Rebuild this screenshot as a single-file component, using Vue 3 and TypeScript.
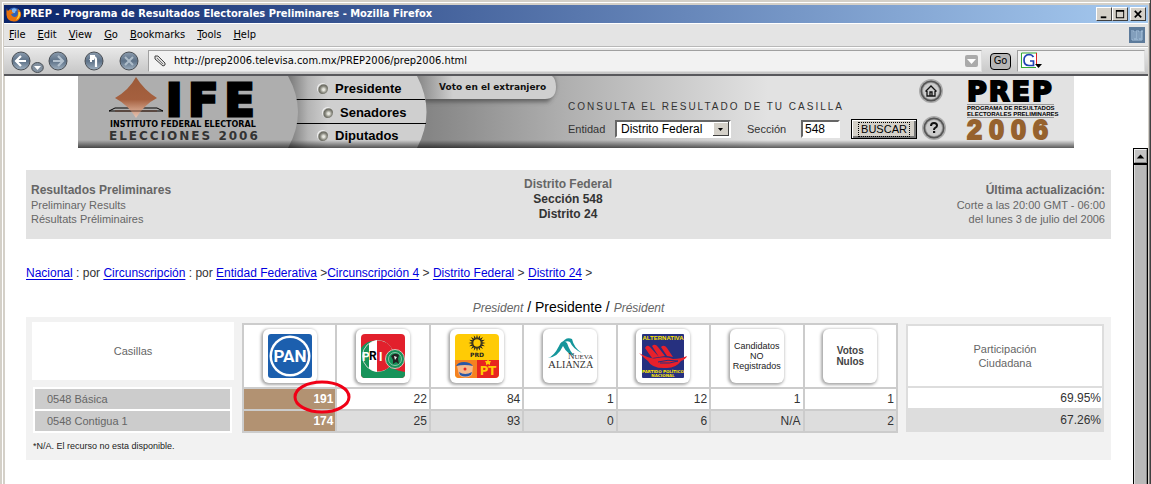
<script setup lang="ts">
interface Party {
  id: string
  name: string
  votes: [string, string]
}

const menus: string[] = ['File', 'Edit', 'View', 'Go', 'Bookmarks', 'Tools', 'Help']
const elections: string[] = ['Presidente', 'Senadores', 'Diputados']
const stations: string[] = ['0548 Básica', '0548 Contigua 1']
const turnout: string[] = ['69.95%', '67.26%']

const parties: Party[] = [
  { id: 'pan', name: 'PAN', votes: ['191', '174'] },
  { id: 'pri', name: 'PRI', votes: ['22', '25'] },
  { id: 'prd', name: 'PRD PT', votes: ['84', '93'] },
  { id: 'alianza', name: 'Nueva Alianza', votes: ['1', '0'] },
  { id: 'alternativa', name: 'Alternativa', votes: ['12', '6'] },
  { id: 'otros', name: 'Candidatos no registrados', votes: ['1', 'N/A'] },
  { id: 'nulos', name: 'Votos nulos', votes: ['1', '2'] },
]

const rays: number[] = Array.from({ length: 16 }, (_, i) => i * 22.5)
</script>

<template>
  <div class="window">
    <header class="titlebar">
      <svg class="fox" viewBox="0 0 16 16" aria-hidden="true">
        <circle cx="8" cy="8" r="6.6" fill="#2f62b8" />
        <path d="M6 3 Q9 1 11 4 Q9 5 9 7 L6 7Z" fill="#7fb6ee" />
        <path d="M1 2 Q1 5 2 5 Q4 3 6 4 Q5 6 8 7 Q6 8 5 8 Q6 11 9 11 Q12 10 12 7 Q11 4 12 3 Q16 6 15 10 Q13 15.500 8 15.500 Q1 15 .5 9 Q0 5 1 2Z" fill="#e8720c" />
        <path d="M14 6 Q15 12 10 14 Q13 10 12.500 6Z" fill="#ffd23a" />
      </svg>
      <h1>PREP - Programa de Resultados Electorales Preliminares - Mozilla Firefox</h1>
      <div class="winbtns">
        <button type="button" aria-label="Minimize">
          <svg viewBox="0 0 13 11"><path d="M3 8h6v2H3z" /></svg>
        </button>
        <button type="button" aria-label="Maximize">
          <svg viewBox="0 0 13 11"><path d="M2 1h9v9H2zM3 3v6h7V3z" fill-rule="evenodd" /></svg>
        </button>
        <button type="button" class="close" aria-label="Close">
          <svg viewBox="0 0 13 11"><path d="M3 2l7 7M10 2l-7 7" stroke="#000" stroke-width="1.800" /></svg>
        </button>
      </div>
    </header>

    <nav class="menubar" aria-label="Menu">
      <button v-for="m in menus" :key="m" type="button"><u>{{ m[0] }}</u>{{ m.slice(1) }}</button>
      <svg class="throbber" viewBox="0 0 16 16" aria-hidden="true">
        <path d="M0 0h16v16H0z" fill="#5d7b9b" />
        <path d="M2 4h3v8h2V4h3v8h2V4h2M3 5v8h5V5M8 13h5V4" fill="none" stroke="#a9c4de" />
      </svg>
    </nav>

    <div class="toolbar">
      <svg width="0" height="0" class="defs" aria-hidden="true">
        <defs>
          <linearGradient id="orb" x1="0" y1="0" x2="0" y2="1">
            <stop offset="0" stop-color="#8b9cae" />
            <stop offset=".5" stop-color="#5d7187" />
            <stop offset="1" stop-color="#9fb0c0" />
          </linearGradient>
        </defs>
      </svg>
      <button type="button" class="orb" aria-label="Back">
        <svg viewBox="0 0 20 20"><circle cx="10" cy="10" r="9" fill="url(#orb)" stroke="#4a4f55" /><path d="M15 10H6M10 5l-5 5 5 5" fill="none" stroke="#fff" stroke-width="2.200" /></svg>
      </button>
      <button type="button" class="drop" aria-label="History">
        <svg viewBox="0 0 13 13"><ellipse cx="6.500" cy="6.500" rx="5.800" ry="5" fill="#8391a0" stroke="#4a4f55" /><path d="M3 5h7L6.500 9z" fill="#fff" /></svg>
      </button>
      <button type="button" class="orb fwd" aria-label="Forward">
        <svg viewBox="0 0 20 20"><circle cx="10" cy="10" r="9" fill="url(#orb)" stroke="#4a4f55" /><path d="M5 10h9M10 5l5 5-5 5" fill="none" stroke="#b4c2cf" stroke-width="2.200" /></svg>
      </button>
      <button type="button" class="orb reload" aria-label="Reload">
        <svg viewBox="0 0 20 20"><circle cx="10" cy="10" r="9" fill="url(#orb)" stroke="#4a4f55" /><path d="M12 16V9q0-3-3-3" fill="none" stroke="#fff" stroke-width="2.200" /><path d="M10 4v5H5z" fill="#fff" /><path d="M6 4h5v2H8v5H6z" fill="#fff" /></svg>
      </button>
      <button type="button" class="orb stop" aria-label="Stop">
        <svg viewBox="0 0 20 20"><circle cx="10" cy="10" r="9" fill="url(#orb)" stroke="#4a4f55" /><path d="M6 6l8 8M14 6l-8 8" stroke="#aebdca" stroke-width="2" /></svg>
      </button>
      <div class="field url">
        <svg class="clip" viewBox="0 0 12 12" aria-hidden="true"><path d="M1 1h3l7 7v2l-2 1L1 4z" fill="#ddd" stroke="#444" /><path d="M3 3l6 6" stroke="#777" /></svg>
        <input type="text" aria-label="Location" value="http://prep2006.televisa.com.mx/PREP2006/prep2006.html" />
        <button type="button" class="arrow" aria-label="Show history"><svg viewBox="0 0 13 13"><path d="M2 4h9L6.500 9z" fill="#fff" /></svg></button>
      </div>
      <button type="button" class="go">Go</button>
      <div class="field search">
        <svg class="g" viewBox="0 0 22 18" aria-hidden="true">
          <path d="M1 1h15v15H1z" fill="#fff" />
          <path d="M.5 16V1H16" fill="none" stroke="#35a835" />
          <path d="M15.500 1v11" stroke="#e02020" />
          <path d="M1 15.500h14" stroke="#35a835" />
          <path d="M12.500 5Q11 2.500 8 2.500Q3 3 3 8Q3 13.500 8 13.500H12.500V9H9" fill="none" stroke="#2142b5" stroke-width="1.700" />
          <path d="M14 12h7l-3.500 4z" fill="#000" />
        </svg>
        <input type="text" aria-label="Google" />
      </div>
    </div>

    <section class="banner">
      <svg class="shapes" viewBox="0 0 500 72" aria-hidden="true">
        <defs>
          <linearGradient id="navfill" gradientUnits="userSpaceOnUse" x1="210" y1="0" x2="250" y2="0">
            <stop offset="0" stop-color="#777" />
            <stop offset=".5" stop-color="#b4b4b4" />
            <stop offset="1" stop-color="#cfcfcf" />
          </linearGradient>
          <linearGradient id="pillfill" gradientUnits="userSpaceOnUse" x1="340" y1="0" x2="375" y2="0">
            <stop offset="0" stop-color="#888" />
            <stop offset="1" stop-color="#cfcfcf" />
          </linearGradient>
          <filter id="soft" x="-10%" y="-20%" width="120%" height="160%"><feGaussianBlur stdDeviation="2" /></filter>
        </defs>
        <path d="M338 0H475Q482 14 470 26H344z" fill="#444" opacity=".7" filter="url(#soft)" />
        <path d="M338 0H474Q478 3 478 11Q478 23 467 23H338z" fill="url(#pillfill)" />
        <path d="M205 0H339Q358 36 339 72H205z" fill="url(#navfill)" />
        <path d="M210 23.500H347M210 47.500H348" stroke="#000" />
        <path d="M0 0H210Q230 36 210 72H0z" fill="#aeaeae" />
      </svg>
      <div class="ife">
        <svg class="diamond" viewBox="0 0 56 44" aria-hidden="true">
          <defs>
            <linearGradient id="copper" x1="0" y1="0" x2="0" y2="1">
              <stop offset="0" stop-color="#9c5a38" />
              <stop offset=".55" stop-color="#a5603f" />
              <stop offset=".8" stop-color="#cf9c82" />
              <stop offset="1" stop-color="#e6c3b3" />
            </linearGradient>
          </defs>
          <path d="M1 35l6-3h42l6 3z" fill="none" stroke="#000" />
          <path d="M28 1q8 13 21 21q-12 6-21 20q-8-13-21-20q14-8 21-21z" fill="url(#copper)" />
          <path d="M7 35h42" stroke="#5c3a2c" />
        </svg>
        <strong class="big">IFE</strong>
        <span class="inst">INSTITUTO FEDERAL ELECTORAL</span>
        <span class="elec">ELECCIONES 2006</span>
      </div>
      <nav class="elections" aria-label="Elecciones">
        <a v-for="e in elections" :key="e" href="#"><i class="dot"></i>{{ e }}</a>
      </nav>
      <a class="abroad" href="#">Voto en el extranjero</a>
      <form class="lookup" @submit.prevent>
        <p>CONSULTA EL RESULTADO DE TU CASILLA</p>
        <div class="controls">
          <label for="entidad">Entidad</label>
          <span class="selectwrap">
            <select id="entidad"><option>Distrito Federal</option></select>
            <svg viewBox="0 0 16 14" aria-hidden="true"><path d="M0 0h16v14H0z" fill="#404040" /><path d="M0 0h15v13H0z" fill="#fff" /><path d="M1 1h14v12H1z" fill="#d4d0c8" /><path d="M5 6h5L7.500 9z" fill="#000" /></svg>
          </span>
          <label class="sec" for="seccion">Sección</label>
          <input id="seccion" type="text" value="548" />
          <button type="submit"><span>BUSCAR</span></button>
        </div>
      </form>
      <div class="helpers">
        <a href="#" aria-label="Inicio">
          <svg viewBox="0 0 26 26"><circle cx="13" cy="13" r="12" fill="#aaa" /><circle cx="13" cy="13" r="10.500" fill="#555" /><circle cx="13" cy="13" r="9" fill="#999" /><circle cx="13" cy="13" r="8" fill="#ccc" /><path d="M7.500 13.500L13 8l5.500 5.500M9 13v5h8v-5M12 18v-4h2v4" fill="none" stroke="#111" stroke-width="1.300" /></svg>
        </a>
        <a href="#" class="q" aria-label="Ayuda">
          <svg viewBox="0 0 26 26"><circle cx="13" cy="13" r="12" fill="#aaa" /><circle cx="13" cy="13" r="10.500" fill="#555" /><circle cx="13" cy="13" r="9" fill="#999" /><circle cx="13" cy="13" r="8" fill="#ccc" /><path d="M10 11q0-3 3-3t3 2.500q0 1.500-1.500 2.200T13 15" fill="none" stroke="#111" stroke-width="2" /><path d="M12 16h2.200v2H12z" fill="#111" /></svg>
        </a>
      </div>
      <div class="prep">
        <strong>PREP</strong>
        <span class="small">PROGRAMA DE RESULTADOS<br />ELECTORALES PRELIMINARES</span>
        <strong class="year">2006</strong>
      </div>
    </section>

    <div class="frame">
      <main>
        <section class="info">
          <div class="left">
            <b>Resultados Preliminares</b>
            <span>Preliminary Results</span>
            <span>Résultats Préliminaires</span>
          </div>
          <div class="mid">
            <b class="grey">Distrito Federal</b>
            <b>Sección 548</b>
            <b>Distrito 24</b>
          </div>
          <div class="right">
            <b>Última actualización:</b>
            <span>Corte a las 20:00 GMT - 06:00</span>
            <span>del lunes 3 de julio del 2006</span>
          </div>
        </section>

        <nav class="crumbs" aria-label="Ruta">
          <a href="#">Nacional</a> : por <a href="#">Circunscripción</a> : por <a href="#">Entidad Federativa</a> &gt;<a href="#">Circunscripción 4</a> &gt; <a href="#">Distrito Federal</a> &gt; <a href="#">Distrito 24</a> &gt;
        </nav>

        <h2><i>President</i> / Presidente / <i>Président</i></h2>

        <section class="panel">
          <div class="stations">
            <div id="casillas" class="head">Casillas</div>
            <table aria-labelledby="casillas">
              <tbody>
                <tr v-for="s in stations" :key="s"><th scope="row">{{ s }}</th></tr>
              </tbody>
            </table>
          </div>

          <table class="votes">
            <thead>
              <tr>
                <th v-for="p in parties" :key="p.id" scope="col" :aria-label="p.name">
                  <div class="card">
                    <svg v-if="p.id === 'pan'" viewBox="0 0 44 44">
                      <rect width="44" height="44" rx="3" fill="#1c5fae" />
                      <circle cx="22" cy="22" r="20.500" fill="#fff" />
                      <circle cx="22" cy="22" r="18" fill="#1c5fae" />
                      <text x="22" y="28" text-anchor="middle" class="pan">PAN</text>
                    </svg>
                    <svg v-else-if="p.id === 'pri'" viewBox="0 0 44 44">
                      <rect width="44" height="44" rx="4" fill="#e2202c" />
                      <path d="M0 14Q10 2 22 10Q30 12 26 24Q28 36 44 38V40Q44 44 40 44H4Q0 44 0 40z" fill="#17935a" />
                      <circle cx="17" cy="22" r="15.500" fill="#17935a" stroke="#c9d6cc" />
                      <path d="M8 9.500q4-3 8-3.500v32q-4-.5-8-3.500z" fill="#fff" />
                      <path d="M16 6.500Q32 7 32 22Q32 37 16 37.500z" fill="#e2202c" />
                      <circle cx="34" cy="25" r="9.500" fill="#17935a" stroke="#e7b9b5" />
                      <circle cx="34" cy="25" r="6.500" fill="none" stroke="#8fc4a8" />
                      <path d="M30 22q4-4 8-1l-1 4 1 5-3-2-3 2 0-4z" fill="#222" />
                      <path d="M33 22l3 1-2 3z" fill="#eee" />
                      <text x="1" y="27" class="pri" fill="#fff">P</text>
                      <text x="8" y="26" class="pri" fill="#000">R</text>
                      <text x="18" y="27" class="pri" fill="#fff">I</text>
                    </svg>
                    <svg v-else-if="p.id === 'prd'" viewBox="0 0 44 44">
                      <rect width="44" height="44" rx="4" fill="#ffcb05" />
                      <path d="M0 26h22v18H4q-4 0-4-4z" fill="#f58220" />
                      <path d="M22 26h22v14q0 4-4 4H22z" fill="#e8251f" />
                      <g transform="translate(22 9)">
                        <path v-for="r in rays" :key="r" d="M-1-4.500L0-8.500 1-4.500z" :transform="`rotate(${r})`" fill="#222" />
                        <circle r="4.800" fill="#222" /><circle r="3.700" fill="#ffcb05" />
                      </g>
                      <text x="22" y="23" text-anchor="middle" class="prd">PRD</text>
                      <path d="M2 32q8-7 16 0l-1 9q-7 5-13 0z" fill="#f6b98c" />
                      <path d="M1 32q2-4 8-4t9 4q-8-2-17 0z" fill="#2b57a5" />
                      <path d="M4 38q6 4 13 0l-1 3q-6 3-11 0z" fill="#2b57a5" />
                      <circle cx="10" cy="35" r="1.500" fill="#e8251f" />
                      <text x="33" y="41" text-anchor="middle" class="pt">PT</text>
                      <path d="M33 25l1 2 2 0-1 2 0 2-2-1-2 1 0-2-1-2 2 0z" fill="#ffcb05" />
                    </svg>
                    <svg v-else-if="p.id === 'alianza'" viewBox="0 0 48 44" class="wide">
                      <path d="M2 24q6-2 11-12q3-7 8-3q3 9 8 13q-8-2-12-10q-5 11-15 12z" fill="#14969b" />
                      <path d="M15 10q5-8 11-5q2 9 10 14q-9-4-12-11q-4-2-9 2z" fill="#14969b" />
                      <text x="22" y="25" class="na1">N<tspan class="sm">UEVA</tspan></text>
                      <text x="2" y="34" class="na2">A<tspan class="sm2">LIANZA</tspan></text>
                    </svg>
                    <svg v-else-if="p.id === 'alternativa'" viewBox="0 0 48 44" class="wide">
                      <rect x="3" width="42" height="44" rx="1" fill="#26307f" />
                      <text x="24" y="6" text-anchor="middle" class="alt">ALTERNATIVA</text>
                      <path d="M0 19q12 7 18 5q10-2 16 1 8 0 14-3q-1 3-6 5q-5 7-14 7q-15 1-19-7q-4-3-9-8z" fill="#e8202a" />
                      <path d="M6 14q2-4 5-1l9 10-7 1zM13 12q3-3 6 1l7 9-6 1zM22 13q3-3 6 1l6 9-6-1z" fill="#e8202a" />
                      <path d="M19 28q10-3 20-1q-8 3-18 2" fill="none" stroke="#26307f" />
                      <text x="24" y="39" text-anchor="middle" class="alt2">PARTIDO POLÍTICO</text>
                      <text x="24" y="43" text-anchor="middle" class="alt2">NACIONAL</text>
                    </svg>
                    <span v-else-if="p.id === 'otros'" class="words">Candidatos<br />NO<br />Registrados</span>
                    <span v-else class="words spaced">Votos<br />Nulos</span>
                  </div>
                </th>
              </tr>
            </thead>
            <tbody>
              <tr v-for="(s, r) in stations" :key="s">
                <td v-for="p in parties" :key="p.id" :class="{ winner: p.id === 'pan' }">
                  {{ p.votes[r] }}
                  <svg v-if="p.id === 'pan' && r === 0" class="ring" viewBox="0 0 58 34" aria-hidden="true">
                    <ellipse cx="29" cy="17" rx="27" ry="15" fill="none" stroke="#f00016" stroke-width="3" />
                  </svg>
                </td>
              </tr>
            </tbody>
          </table>

          <table class="turnout">
            <thead>
              <tr><th scope="col">Participación<br />Ciudadana</th></tr>
            </thead>
            <tbody>
              <tr v-for="t in turnout" :key="t"><td>{{ t }}</td></tr>
            </tbody>
          </table>

          <p class="note">*N/A. El recurso no esta disponible.</p>
        </section>
      </main>
      <div class="scroll">
        <button type="button" aria-label="Scroll up"><svg viewBox="0 0 13 13"><path d="M2 9h9L6.500 4z" /></svg></button>
        <div class="thumb"></div>
      </div>
    </div>
  </div>
</template>

<style>
body {
  margin: 0;
  overflow: hidden;
}
</style>

<style scoped>
* {
  box-sizing: border-box;
}
.window {
  min-height: 100vh;
  display: flex;
  flex-direction: column;
  padding: 5px 0 0 4px;
  border-right: 1px solid #404040;
  background: #d4d0c8;
  box-shadow: inset 2px 2px 0 #d4d0c8, inset 3px 3px 0 #fff, inset -1px 0 0 #808080;
  font-family: "Liberation Sans", Arial, sans-serif;
  color: #333;
}
button {
  font: inherit;
  color: #000;
  padding: 0;
  border: 0;
  background: none;
}
button svg {
  display: block;
}
.titlebar,
.menubar,
.toolbar,
.banner,
.frame {
  margin-right: 2px;
}
.titlebar {
  display: flex;
  align-items: center;
  height: 18px;
  padding: 0 2px;
  background: linear-gradient(90deg, #0a246a, #a6caf0);
}
.fox {
  width: 16px;
  height: 16px;
  flex: none;
}
h1 {
  flex: 1;
  margin: 0 0 0 1px;
  font: bold 11px/18px "DejaVu Sans Condensed", "DejaVu Sans", sans-serif;
  color: #fff;
  white-space: nowrap;
}
.winbtns {
  display: flex;
}
.winbtns button {
  width: 16px;
  height: 14px;
  padding: 1px;
  background: #d4d0c8;
  border: 1px solid;
  border-color: #fff #404040 #404040 #fff;
}
.winbtns .close {
  margin-left: 2px;
}
.menubar {
  display: flex;
  align-items: center;
  gap: 12px;
  height: 24px;
  padding: 0 3px 0 5px;
  border-top: 1px solid #fff;
  border-bottom: 1px solid #b8b8b8;
  background: #e4e4e4;
  font: 11px/16px "DejaVu Sans Condensed", "DejaVu Sans", sans-serif;
}
.throbber {
  width: 16px;
  height: 16px;
  margin-left: auto;
}
.toolbar {
  display: flex;
  align-items: center;
  height: 29px;
  padding: 0 3px 0 7px;
  border-top: 1px solid #fff;
  border-bottom: 2px solid #58585c;
  background: linear-gradient(#e8e8e8, #c6c6c6);
}
.defs {
  position: absolute;
}
.orb {
  flex: none;
  width: 20px;
  height: 20px;
}
.drop {
  flex: none;
  width: 13px;
  height: 13px;
  margin-top: 12px;
}
.fwd {
  margin-left: 4px;
}
.reload {
  margin-left: 16px;
}
.stop {
  margin-left: 15px;
}
.field {
  display: flex;
  align-items: center;
  height: 22px;
  background: #f2f2f2;
  border: 1px solid;
  border-color: #a0a0a0 #ddd #ddd #a0a0a0;
}
.field input {
  flex: 1;
  width: 0;
  min-width: 0;
  padding: 0;
  border: 0;
  background: none;
  outline: 0;
  font: 11px/18px "DejaVu Sans Condensed", "DejaVu Sans", sans-serif;
  color: #000;
}
.url {
  flex: 1;
  margin-left: 9px;
  padding: 0 3px 0 5px;
}
.clip {
  width: 12px;
  height: 12px;
  margin-right: 8px;
}
.arrow {
  width: 13px;
  height: 12px;
  border-radius: 2px;
  background: #aaa;
}
.go {
  flex: none;
  width: 21px;
  height: 17px;
  margin: 0 6px 0 8px;
  border: 1px solid #000;
  border-radius: 4px;
  background: #b6b6b6;
  font: 11px/14px "DejaVu Sans Condensed", "DejaVu Sans", sans-serif;
}
.search {
  flex: 0 1 128px;
  min-width: 60px;
  padding-left: 3px;
}
.g {
  width: 22px;
  height: 18px;
  flex: none;
}

.banner {
  position: relative;
  height: 72px;
  flex: none;
  display: flex;
  border-left: 1px solid #d4d0c8;
  padding: 0 74px 0 73px;
  background: linear-gradient(90deg, #858585 350px, #b0b0b0 490px, #e2e2e2 690px) content-box, #fff;
}
.banner::after {
  content: "";
  position: absolute;
  left: 73px;
  right: 74px;
  bottom: 0;
  height: 8px;
  background: linear-gradient(transparent, rgba(0, 0, 0, .6));
}
.shapes {
  position: absolute;
  width: 500px;
  height: 72px;
}
.ife {
  position: relative;
  width: 210px;
  height: 72px;
  flex: none;
  display: grid;
  grid-template-columns: 56px 1fr;
  grid-template-rows: 44px 10px 14px;
  padding-left: 30px;
}
.diamond {
  width: 56px;
  height: 44px;
}
.big {
  padding-left: 2px;
  font: bold 44px/50px "DejaVu Sans", sans-serif;
  letter-spacing: 6px;
  color: #000;
  -webkit-text-stroke: 3px #000;
}
.inst,
.elec {
  grid-column: 1 / 3;
  padding-left: 2px;
  font: bold 8px/10px "DejaVu Sans", sans-serif;
  color: #000;
  white-space: nowrap;
}
.elec {
  padding-left: 1px;
  font-size: 12px;
  line-height: 13px;
  letter-spacing: 2px;
  color: #333;
}
.elections {
  position: relative;
  width: 138px;
  flex: none;
  display: flex;
  flex-direction: column;
  padding-left: 29px;
}
.elections a {
  display: flex;
  align-items: center;
  height: 24px;
  font-size: 13px;
  font-weight: bold;
  color: #000;
  text-decoration: none;
}
.elections a:nth-child(2) {
  padding-left: 5px;
}
.elections a:last-child {
  height: 22px;
}
.dot {
  width: 11px;
  height: 11px;
  margin-right: 7px;
  border-radius: 50%;
  background: radial-gradient(circle at 60% 60%, #e8e8e0 10%, #8a8a80 35%, #6b6b62 50%, #eee 65%);
}
.abroad {
  position: relative;
  width: 142px;
  flex: none;
  padding-left: 13px;
  font: bold 9px/22px "DejaVu Sans", sans-serif;
  color: #111;
  text-decoration: none;
  white-space: nowrap;
}
.lookup {
  position: relative;
  flex: none;
  padding-top: 24px;
  font-size: 11px;
}
.lookup p {
  margin: 0;
  font-size: 10px;
  line-height: 14px;
  letter-spacing: 2px;
}
.controls {
  display: flex;
  align-items: center;
  height: 20px;
  margin-top: 5px;
}
.controls label {
  width: 47px;
}
.controls .sec {
  width: 54px;
  margin-left: 16px;
}
.selectwrap {
  position: relative;
  display: flex;
}
.selectwrap svg {
  position: absolute;
  right: 2px;
  top: 2px;
  width: 16px;
  height: 14px;
  pointer-events: none;
}
select,
.controls input {
  appearance: none;
  height: 18px;
  margin: 0;
  padding: 0 0 0 4px;
  border: 2px solid;
  border-color: #666 #fff #fff #666;
  border-radius: 0;
  background: #fff;
  font: 12px/14px "Liberation Sans", Arial, sans-serif;
  color: #000;
}
select {
  width: 116px;
}
.controls input {
  width: 39px;
  padding-left: 2px;
}
.controls button {
  width: 66px;
  height: 20px;
  margin-left: 11px;
  padding: 1px 6px;
  border: 1px solid #000;
  background: #d4d0c8;
  box-shadow: inset 1px 1px 0 #fff, inset -2px -2px 0 #777;
  font-size: 11px;
}
.controls button span {
  display: block;
  border: 1px dotted #000;
  line-height: 13px;
}
.helpers {
  position: relative;
  flex: none;
  margin-left: 1px;
  padding-top: 2px;
}
.helpers a {
  display: block;
  width: 26px;
  height: 26px;
}
.helpers .q {
  margin: 11px 0 0 3px;
}
.prep {
  position: relative;
  margin: 0 20px 0 auto;
  width: 87px;
  display: flex;
  flex-direction: column;
  color: #000;
}
.prep strong {
  font: bold 27px/32px "DejaVu Sans", sans-serif;
  height: 28px;
  -webkit-text-stroke: 2px #000;
  letter-spacing: 2px;
}
.prep .small {
  border: solid #999;
  border-width: 1px 0;
  font-size: 6px;
  line-height: 6px;
  font-weight: bold;
  white-space: nowrap;
}
.prep .year {
  font: bold 27px/24px "Liberation Sans", sans-serif;
  letter-spacing: 7px;
  color: #96622e;
  -webkit-text-stroke: 2px #96622e;
}

.frame {
  flex: 1;
  display: flex;
  background: #fff;
  border-left: 1px solid #d4d0c8;
}
main {
  flex: 1;
  padding: 22px 22px 0 21px;
}
.scroll {
  width: 15px;
  display: flex;
  flex-direction: column;
  border: solid #000;
  border-width: 1px 1px 0;
  background: #b9b9b9;
}
.scroll button {
  height: 14px;
  border: 1px solid;
  border-color: #eee #888 #888 #eee;
  background: #c4c4c4;
}
.thumb {
  flex: 1;
  border-top: 2px solid #000;
  box-shadow: inset 1px 0 0 #ddd, inset -1px 0 0 #888;
}
.info {
  display: grid;
  grid-template-columns: 1fr 1fr 1fr;
  height: 69px;
  padding: 0 6px 0 5px;
  background: #e2e2e2;
  font-size: 11px;
  line-height: 14px;
  color: #666;
}
.info div {
  display: flex;
  flex-direction: column;
}
.info b {
  font-size: 12px;
  line-height: 15px;
}
.left,
.right {
  padding-top: 13px;
}
.mid {
  padding-top: 7px;
  align-items: center;
  color: #333;
}
.grey {
  color: #666;
}
.right {
  align-items: flex-end;
}
.crumbs {
  margin-top: 26px;
  font-size: 12px;
  line-height: 16px;
}
.crumbs a {
  color: #0000e0;
  text-underline-offset: 2px;
}
h2 {
  margin: 18px 0 0;
  text-align: center;
  font-size: 14px;
  line-height: 17px;
  font-weight: normal;
  color: #000;
}
h2 i {
  font-size: 12px;
  color: #666;
}
.panel {
  display: grid;
  grid-template-columns: 202fr 656fr 198fr;
  column-gap: 8px;
  align-items: start;
  padding: 5px 7px 7px 6px;
  background: #f2f2f2;
  font-size: 11px;
  color: #666;
}
table {
  width: 100%;
  table-layout: fixed;
  border-collapse: separate;
  border-spacing: 2px;
}
th,
td {
  padding: 0;
  font-weight: normal;
}
.stations .head {
  height: 58px;
  line-height: 58px;
  text-align: center;
  background: #fff;
}
.stations table {
  width: auto;
  min-width: calc(100% - 3px);
  margin: 7px 0 0 1px;
  background: #fff;
}
.stations th {
  height: 20px;
  padding-left: 12px;
  text-align: left;
  background: #ccc;
}
.votes {
  margin-top: 1px;
  background: #ccc;
}
.votes th {
  height: 62px;
  background: #fff;
}
.votes td {
  position: relative;
  height: 20px;
  padding-right: 2px;
  text-align: right;
  font-size: 12px;
  color: #333;
  background: #fff;
}
.votes tr:last-child td {
  background: #ddd;
}
.votes tbody td.winner {
  background: #b29272;
  color: #fff;
  font-weight: bold;
}
.ring {
  position: absolute;
  z-index: 1;
  right: -16px;
  top: -9px;
  width: 58px;
  height: 34px;
}
.card {
  width: 54px;
  height: 54px;
  margin: 0 auto;
  display: flex;
  align-items: center;
  justify-content: center;
  border-radius: 6px;
  background: #fff;
  box-shadow: -1px 1px 3px 1px #aaa;
}
.card svg {
  width: 44px;
  height: 44px;
  flex: none;
}
.card .wide {
  width: 48px;
}
.pan {
  font: bold 17px Roboto, "Liberation Sans", sans-serif;
  fill: #fff;
}
.pri {
  font: bold 12px Roboto, "Liberation Sans", sans-serif;
}
.prd {
  font: bold 6px "DejaVu Sans", sans-serif;
  fill: #222;
}
.pt {
  font: bold 13px "DejaVu Sans Condensed", sans-serif;
  fill: #ffcb05;
}
.na1 {
  font: 9px "Liberation Serif", serif;
  fill: #333;
}
.na2 {
  font: 11px "Liberation Serif", serif;
  fill: #333;
}
.sm {
  font-size: 7px;
}
.sm2 {
  font-size: 10px;
}
.alt {
  font: bold 6px "Liberation Sans", sans-serif;
  fill: #ffe600;
}
.alt2 {
  font: bold 4px "DejaVu Sans", sans-serif;
  fill: #ffe600;
}
.words {
  font-size: 9px;
  line-height: 10px;
  color: #222;
}
.spaced {
  font-size: 10px;
  line-height: 11px;
  font-weight: bold;
  color: #444;
}
.turnout {
  margin-top: 2px;
  background: #ddd;
}
.turnout th {
  height: 60px;
  line-height: 14px;
  background: #fff;
}
.turnout td {
  height: 20px;
  padding-right: 1px;
  text-align: right;
  font-size: 12px;
  color: #333;
  background: #fff;
}
.turnout tr:last-child td {
  background: #ddd;
}
.note {
  grid-column: 1 / -1;
  margin: 6px 0 0 1px;
  font-size: 9px;
  line-height: 14px;
  color: #222;
}
</style>
